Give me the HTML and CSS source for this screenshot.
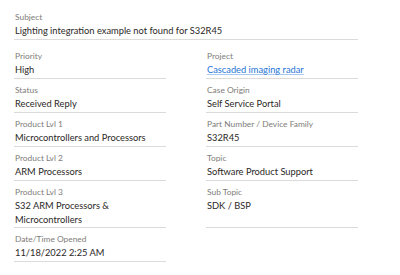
FILE: index.html
```html
<!DOCTYPE html>
<html>
<head>
<meta charset="utf-8">
<link rel="stylesheet" href="styles.css">
</head>
<body>
<div class="record">
  <div class="field field-wide">
    <div class="label">Subject</div>
    <div class="value">Lighting integration example not found for S32R45</div>
  </div>
  <div class="grid">
    <div class="field">
      <div class="label">Priority</div>
      <div class="value">High</div>
    </div>
    <div class="field">
      <div class="label">Project</div>
      <div class="value"><a class="link" href="#">Cascaded imaging radar</a></div>
    </div>
    <div class="field">
      <div class="label">Status</div>
      <div class="value">Received Reply</div>
    </div>
    <div class="field">
      <div class="label">Case Origin</div>
      <div class="value">Self Service Portal</div>
    </div>
    <div class="field">
      <div class="label">Product Lvl 1</div>
      <div class="value">Microcontrollers and Processors</div>
    </div>
    <div class="field">
      <div class="label">Part Number / Device Family</div>
      <div class="value">S32R45</div>
    </div>
    <div class="field">
      <div class="label">Product Lvl 2</div>
      <div class="value">ARM Processors</div>
    </div>
    <div class="field">
      <div class="label">Topic</div>
      <div class="value">Software Product Support</div>
    </div>
    <div class="field">
      <div class="label">Product Lvl 3</div>
      <div class="value">S32 ARM Processors &amp; Microcontrollers</div>
    </div>
    <div class="field">
      <div class="label">Sub Topic</div>
      <div class="value">SDK / BSP</div>
    </div>
    <div class="field">
      <div class="label">Date/Time Opened</div>
      <div class="value">11/18/2022 2:25 AM</div>
    </div>
  </div>
</div>
</body>
</html>
```
FILE: styles.css
```css
html, body {
  margin: 0;
  padding: 0;
  background: #ffffff;
}
body {
  font-family: Lato, "Liberation Sans", sans-serif;
  color: #2b2826;
}
.record {
  width: 344px;
  margin-left: 14px;
  padding-top: 6px;
}
.grid {
  display: grid;
  grid-template-columns: 152px 152px;
  column-gap: 40px;
  margin-top: 5px;
}
.field {
  box-sizing: border-box;
  min-height: 34px;
  padding: 5px 1px 0 1px;
  border-bottom: 1px solid #dddbda;
}
.label {
  font-size: 8.4px;
  line-height: 12px;
  color: #7e7c79;
}
.value {
  margin-top: 1px;
  font-size: 9.3px;
  line-height: 14px;
  color: #2b2826;
}
.link {
  color: #2574d6;
  text-decoration: underline;
  text-decoration-color: #a9c9f0;
}
```
